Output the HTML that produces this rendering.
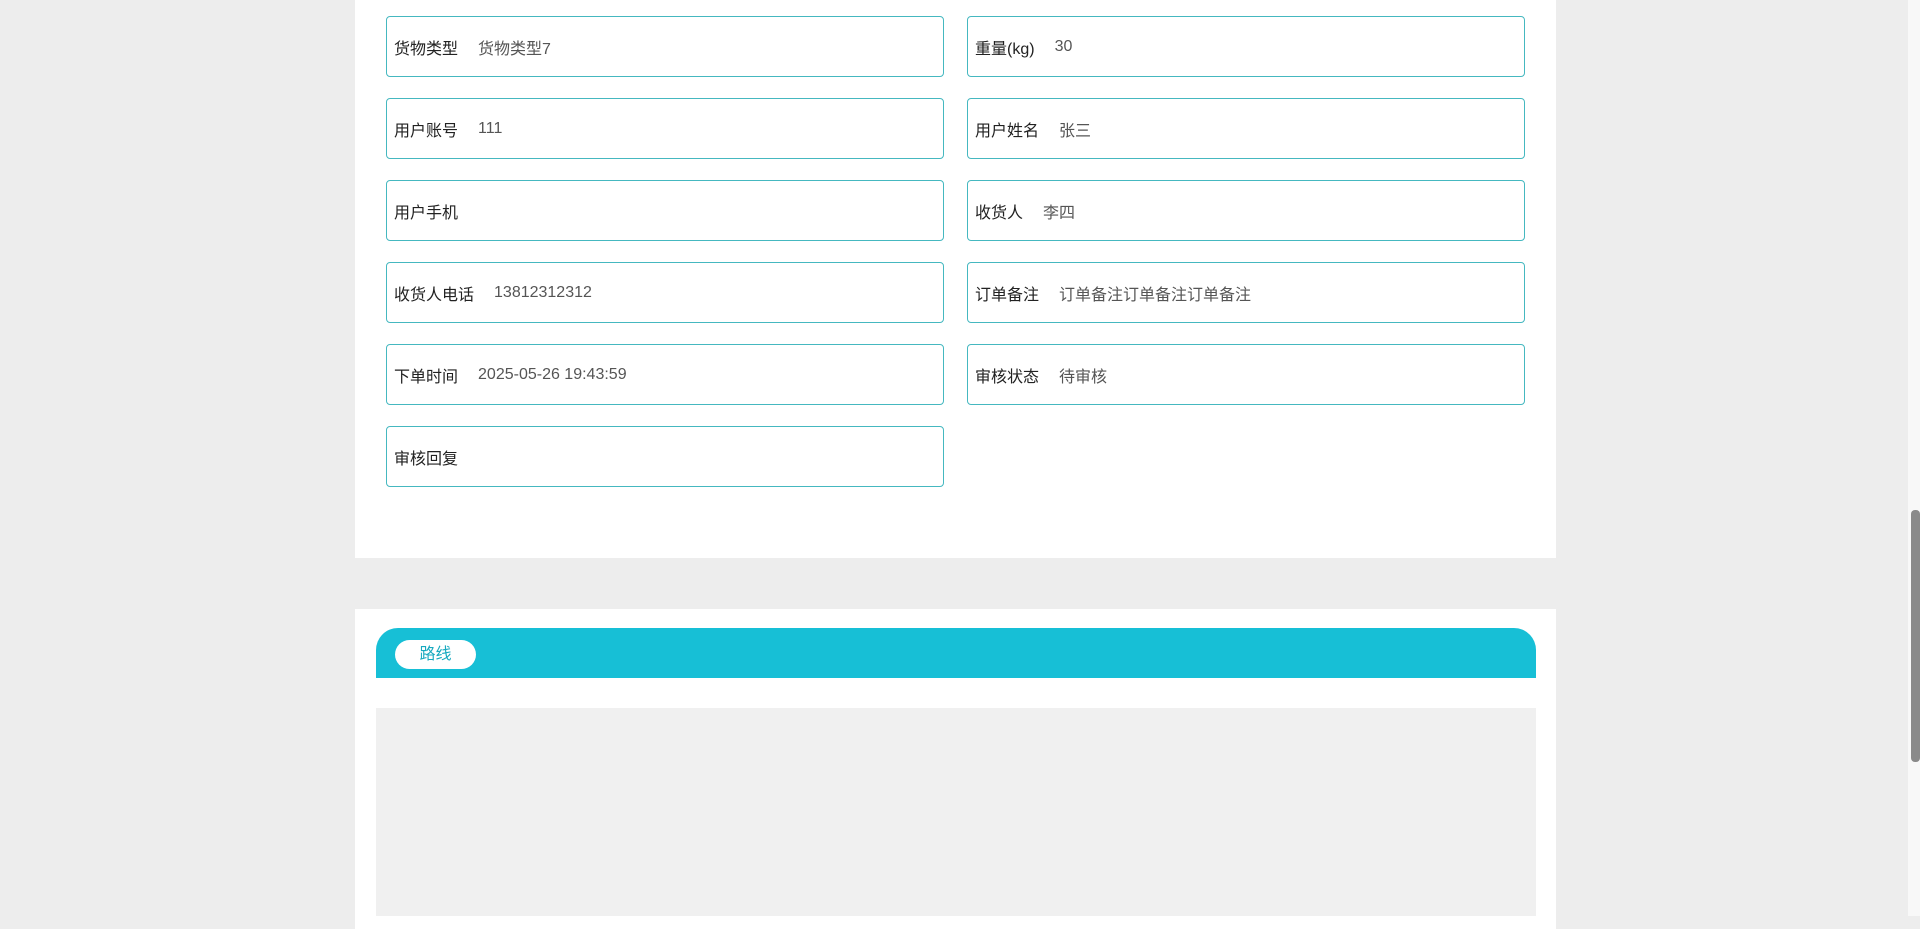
<!DOCTYPE html>
<html><head><meta charset="utf-8"><style>
*{margin:0;padding:0;box-sizing:border-box}
body{width:1920px;height:916px;overflow:hidden;background:#ededed;font-family:"Liberation Sans","Noto Sans CJK SC",sans-serif;position:relative}
.card1{position:absolute;left:355px;top:0;width:1201px;height:558px;background:#fff}
.card2{position:absolute;left:355px;top:609px;width:1201px;height:320px;background:#fff}
.f{position:absolute;width:558px;height:61px;border:1px solid #45b8c0;border-radius:4px;display:flex;align-items:center;padding-left:7px;font-size:16px}
.f b{font-weight:normal;color:#222;margin-right:20px}
.f span{color:#555}
.hdr{position:absolute;left:376px;top:628px;width:1160px;height:50px;background:#17bfd6;border-radius:22px 22px 0 0}
.pill{position:absolute;left:395px;top:640px;width:81px;height:29px;background:#fff;border-radius:15px;color:#17a9bf;font-size:16px;text-align:center;line-height:29px}
.gray{position:absolute;left:376px;top:708px;width:1160px;height:208px;background:#f0f0f0}
.sb{position:absolute;left:1908px;top:0;width:12px;height:916px;background:#f8f8f8}
.th{position:absolute;left:1911px;top:510px;width:9px;height:252px;background:#8a8a8a;border-radius:4px}
</style></head><body>
<div class="card1"></div>
<div class="f" style="left:386px;top:16px"><b>货物类型</b><span>货物类型7</span></div>
<div class="f" style="left:967px;top:16px"><b>重量(kg)</b><span>30</span></div>
<div class="f" style="left:386px;top:98px"><b>用户账号</b><span>111</span></div>
<div class="f" style="left:967px;top:98px"><b>用户姓名</b><span>张三</span></div>
<div class="f" style="left:386px;top:180px"><b>用户手机</b><span></span></div>
<div class="f" style="left:967px;top:180px"><b>收货人</b><span>李四</span></div>
<div class="f" style="left:386px;top:262px"><b>收货人电话</b><span>13812312312</span></div>
<div class="f" style="left:967px;top:262px"><b>订单备注</b><span>订单备注订单备注订单备注</span></div>
<div class="f" style="left:386px;top:344px"><b>下单时间</b><span>2025-05-26 19:43:59</span></div>
<div class="f" style="left:967px;top:344px"><b>审核状态</b><span>待审核</span></div>
<div class="f" style="left:386px;top:426px"><b>审核回复</b><span></span></div>
<div class="card2"></div>
<div class="hdr"></div>
<div class="pill">路线</div>
<div class="gray"></div>
<div class="sb"></div><div class="th"></div>
</body></html>
